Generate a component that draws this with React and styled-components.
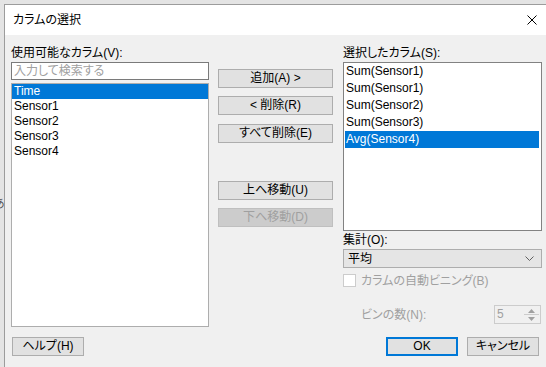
import React from 'react'
import styled, { createGlobalStyle } from 'styled-components'

const GlobalStyle = createGlobalStyle`
  html, body {
    margin: 0;
    padding: 0;
    background: #e4e4e4;
    font-family: "Liberation Sans", "Noto Sans CJK JP", sans-serif;
    font-feature-settings: "palt";
    font-size: 12px;
    color: #000;
  }
  * {
    box-sizing: border-box;
  }
  input, button {
    font-feature-settings: "palt";
  }
`

const Page = styled.div`
  display: flex;
  height: 367px;
  overflow: hidden;
`

const Backdrop = styled.div`
  width: 4px;
  flex: none;
  overflow: hidden;
  padding-top: 197px;
  color: #505050;
  font-size: 12px;
  line-height: 14px;
  span {
    display: block;
    margin-left: -7px;
  }
`

const Window = styled.div`
  flex: 1;
  min-width: 0;
  margin-top: 4px;
  display: flex;
  flex-direction: column;
  background: #f0f0f0;
  border-left: 1px solid #9c9c9c;
  border-top: 1px solid #9c9c9c;
`

const TitleBar = styled.div`
  height: 30px;
  flex: none;
  display: flex;
  align-items: center;
  justify-content: space-between;
  padding: 0 9px 0 8px;
  background: #fff;
  font-size: 12px;
  line-height: 14px;
`

const Body = styled.div`
  display: grid;
  grid-template-columns: 198px 116px 199px;
  column-gap: 9px;
  padding-left: 6px;
  align-items: start;
`

const Column = styled.div`
  display: flex;
  flex-direction: column;
  padding-top: ${p => p.$top || 0}px;
`

const Label = styled.div`
  font-size: 12px;
  line-height: 14px;
  height: 14px;
  white-space: nowrap;
  margin-top: ${p => p.$mt || 0}px;
  color: ${p => (p.$disabled ? '#a0a0a0' : '#000')};
`

const SearchBox = styled.input`
  height: 18px;
  margin-top: 2px;
  border: 1px solid #7a7a7a;
  background: #fff;
  padding: 0 2px;
  font: inherit;
  font-size: 12px;
  line-height: 16px;
  outline: none;
  &::placeholder {
    color: #a0a0a0;
  }
`

const ListBox = styled.div`
  height: ${p => p.$height}px;
  margin-top: ${p => p.$mt}px;
  border: 1px solid ${p => p.$border};
  background: #fff;
  display: flex;
  flex-direction: column;
`

const Row = styled.div`
  height: ${p => p.$h}px;
  line-height: ${p => p.$h}px;
  margin: ${p => p.$inset};
  padding-left: ${p => p.$pad}px;
  font-size: 12px;
  white-space: nowrap;
  overflow: hidden;
  background: ${p => (p.$selected ? '#0078d7' : 'transparent')};
  color: ${p => (p.$selected ? '#fff' : '#000')};
`

const Button = styled.button`
  width: ${p => p.$w || 115}px;
  height: 19px;
  margin: ${p => p.$m || 0};
  padding: 0;
  font: inherit;
  font-size: 12px;
  line-height: 15px;
  text-align: center;
  white-space: nowrap;
  background: #e1e1e1;
  color: #000;
  border: 1px solid #adadad;
  ${p => p.$default && `border: 2px solid #0078d7;`}
  &:disabled {
    background: #cccccc;
    border-color: #bfbfbf;
    color: #a0a0a0;
  }
`

const Select = styled.div`
  height: 19px;
  margin-top: 2px;
  display: flex;
  align-items: center;
  justify-content: space-between;
  padding: 0 7px 0 4px;
  background: #e5e5e5;
  border: 1px solid #adadad;
  font-size: 12px;
  line-height: 14px;
`

const CheckRow = styled.div`
  height: 13px;
  margin-top: 6px;
  display: flex;
  align-items: center;
  gap: 5px;
  color: #a0a0a0;
  font-size: 12px;
  line-height: 14px;
`

const CheckBox = styled.span`
  width: 13px;
  height: 13px;
  flex: none;
  border: 1px solid #cccccc;
  background: #fff;
`

const SpinRow = styled.div`
  height: 19px;
  margin-top: 18px;
  display: flex;
  align-items: center;
  padding: 0 1px 0 18px;
`

const Spinner = styled.div`
  width: 47px;
  height: 19px;
  display: flex;
  align-items: stretch;
  border: 1px solid #cccccc;
  background: #f0f0f0;
  color: #a0a0a0;
  font-size: 12px;
  line-height: 17px;
  span {
    flex: 1;
    padding-left: 2px;
  }
`

const SpinButtons = styled.div`
  width: 15px;
  display: flex;
  flex-direction: column;
  margin: 1px 1px 1px 0;
  background: #f0f0f0;
  & > div {
    flex: 1;
    display: flex;
    align-items: center;
    justify-content: center;
  }
  & > div + div {
    border-top: 1px solid #cccccc;
  }
`

const ButtonRow = styled.div`
  display: flex;
  justify-content: ${p => p.$justify || 'flex-end'};
  gap: 9px;
  margin-top: ${p => p.$mt}px;
  padding: ${p => p.$pad || 0};
`

const leftItems = ['Time', 'Sensor1', 'Sensor2', 'Sensor3', 'Sensor4']
const rightItems = ['Sum(Sensor1)', 'Sum(Sensor1)', 'Sum(Sensor2)', 'Sum(Sensor3)', 'Avg(Sensor4)']

const CloseIcon = () => (
  <svg width="10" height="10" viewBox="0 0 10 10">
    <path d="M0.5 0.5 L9.5 9.5 M9.5 0.5 L0.5 9.5" stroke="#000" strokeWidth="1" fill="none" />
  </svg>
)

const Chevron = () => (
  <svg width="9" height="5" viewBox="0 0 9 5">
    <path d="M0.5 0.5 L4.5 4.5 L8.5 0.5" stroke="#606060" strokeWidth="1" fill="none" />
  </svg>
)

const Arrow = ({ up }) => (
  <svg width="7" height="4" viewBox="0 0 7 4">
    <path d={up ? 'M0 4 L3.5 0 L7 4 Z' : 'M0 0 L3.5 4 L7 0 Z'} fill="#a0a0a0" />
  </svg>
)

const App = () => {
  return (
    <>
      <GlobalStyle />
      <Page>
        <Backdrop>
          <span>あ</span>
        </Backdrop>
        <Window>
          <TitleBar>
            <span>カラムの選択</span>
            <CloseIcon />
          </TitleBar>
          <Body>
            <Column>
              <Label $mt={11}>使用可能なカラム(V):</Label>
              <SearchBox placeholder="入力して検索する" />
              <ListBox $height={244} $mt={3} $border="#adadad">
                {leftItems.map((item, i) => (
                  <Row key={item} $h={15} $pad={2} $inset="0" $selected={i === 0}>
                    {item}
                  </Row>
                ))}
              </ListBox>
              <ButtonRow $justify="flex-start" $mt={10} $pad="0 0 0 1px">
                <Button $w={72}>ヘルプ(H)</Button>
              </ButtonRow>
            </Column>

            <Column $top={34}>
              <Button>追加(A) &gt;</Button>
              <Button $m="8px 0 0">&lt; 削除(R)</Button>
              <Button $m="9px 0 0">すべて削除(E)</Button>
              <Button $m="38px 0 0">上へ移動(U)</Button>
              <Button $m="8px 0 0" disabled>下へ移動(D)</Button>
            </Column>

            <Column>
              <Label $mt={11}>選択したカラム(S):</Label>
              <ListBox $height={169} $mt={2} $border="#828282">
                {rightItems.map((item, i) => (
                  <Row key={i} $h={17} $pad={1} $inset="0 2px 0 1px" $selected={i === 4}>
                    {item}
                  </Row>
                ))}
              </ListBox>
              <Label $mt={2}>集計(O):</Label>
              <Select>
                <span>平均</span>
                <Chevron />
              </Select>
              <CheckRow>
                <CheckBox />
                <span>カラムの自動ビニング(B)</span>
              </CheckRow>
              <SpinRow>
                <Label $disabled style={{ flex: 1 }}>ビンの数(N):</Label>
                <Spinner>
                  <span>5</span>
                  <SpinButtons>
                    <div><Arrow up /></div>
                    <div><Arrow /></div>
                  </SpinButtons>
                </Spinner>
              </SpinRow>
              <ButtonRow $mt={13} $pad="0 3px 0 0">
                <Button $w={72} $default>OK</Button>
                <Button $w={72}>キャンセル</Button>
              </ButtonRow>
            </Column>
          </Body>
        </Window>
      </Page>
    </>
  )
}

export default App
